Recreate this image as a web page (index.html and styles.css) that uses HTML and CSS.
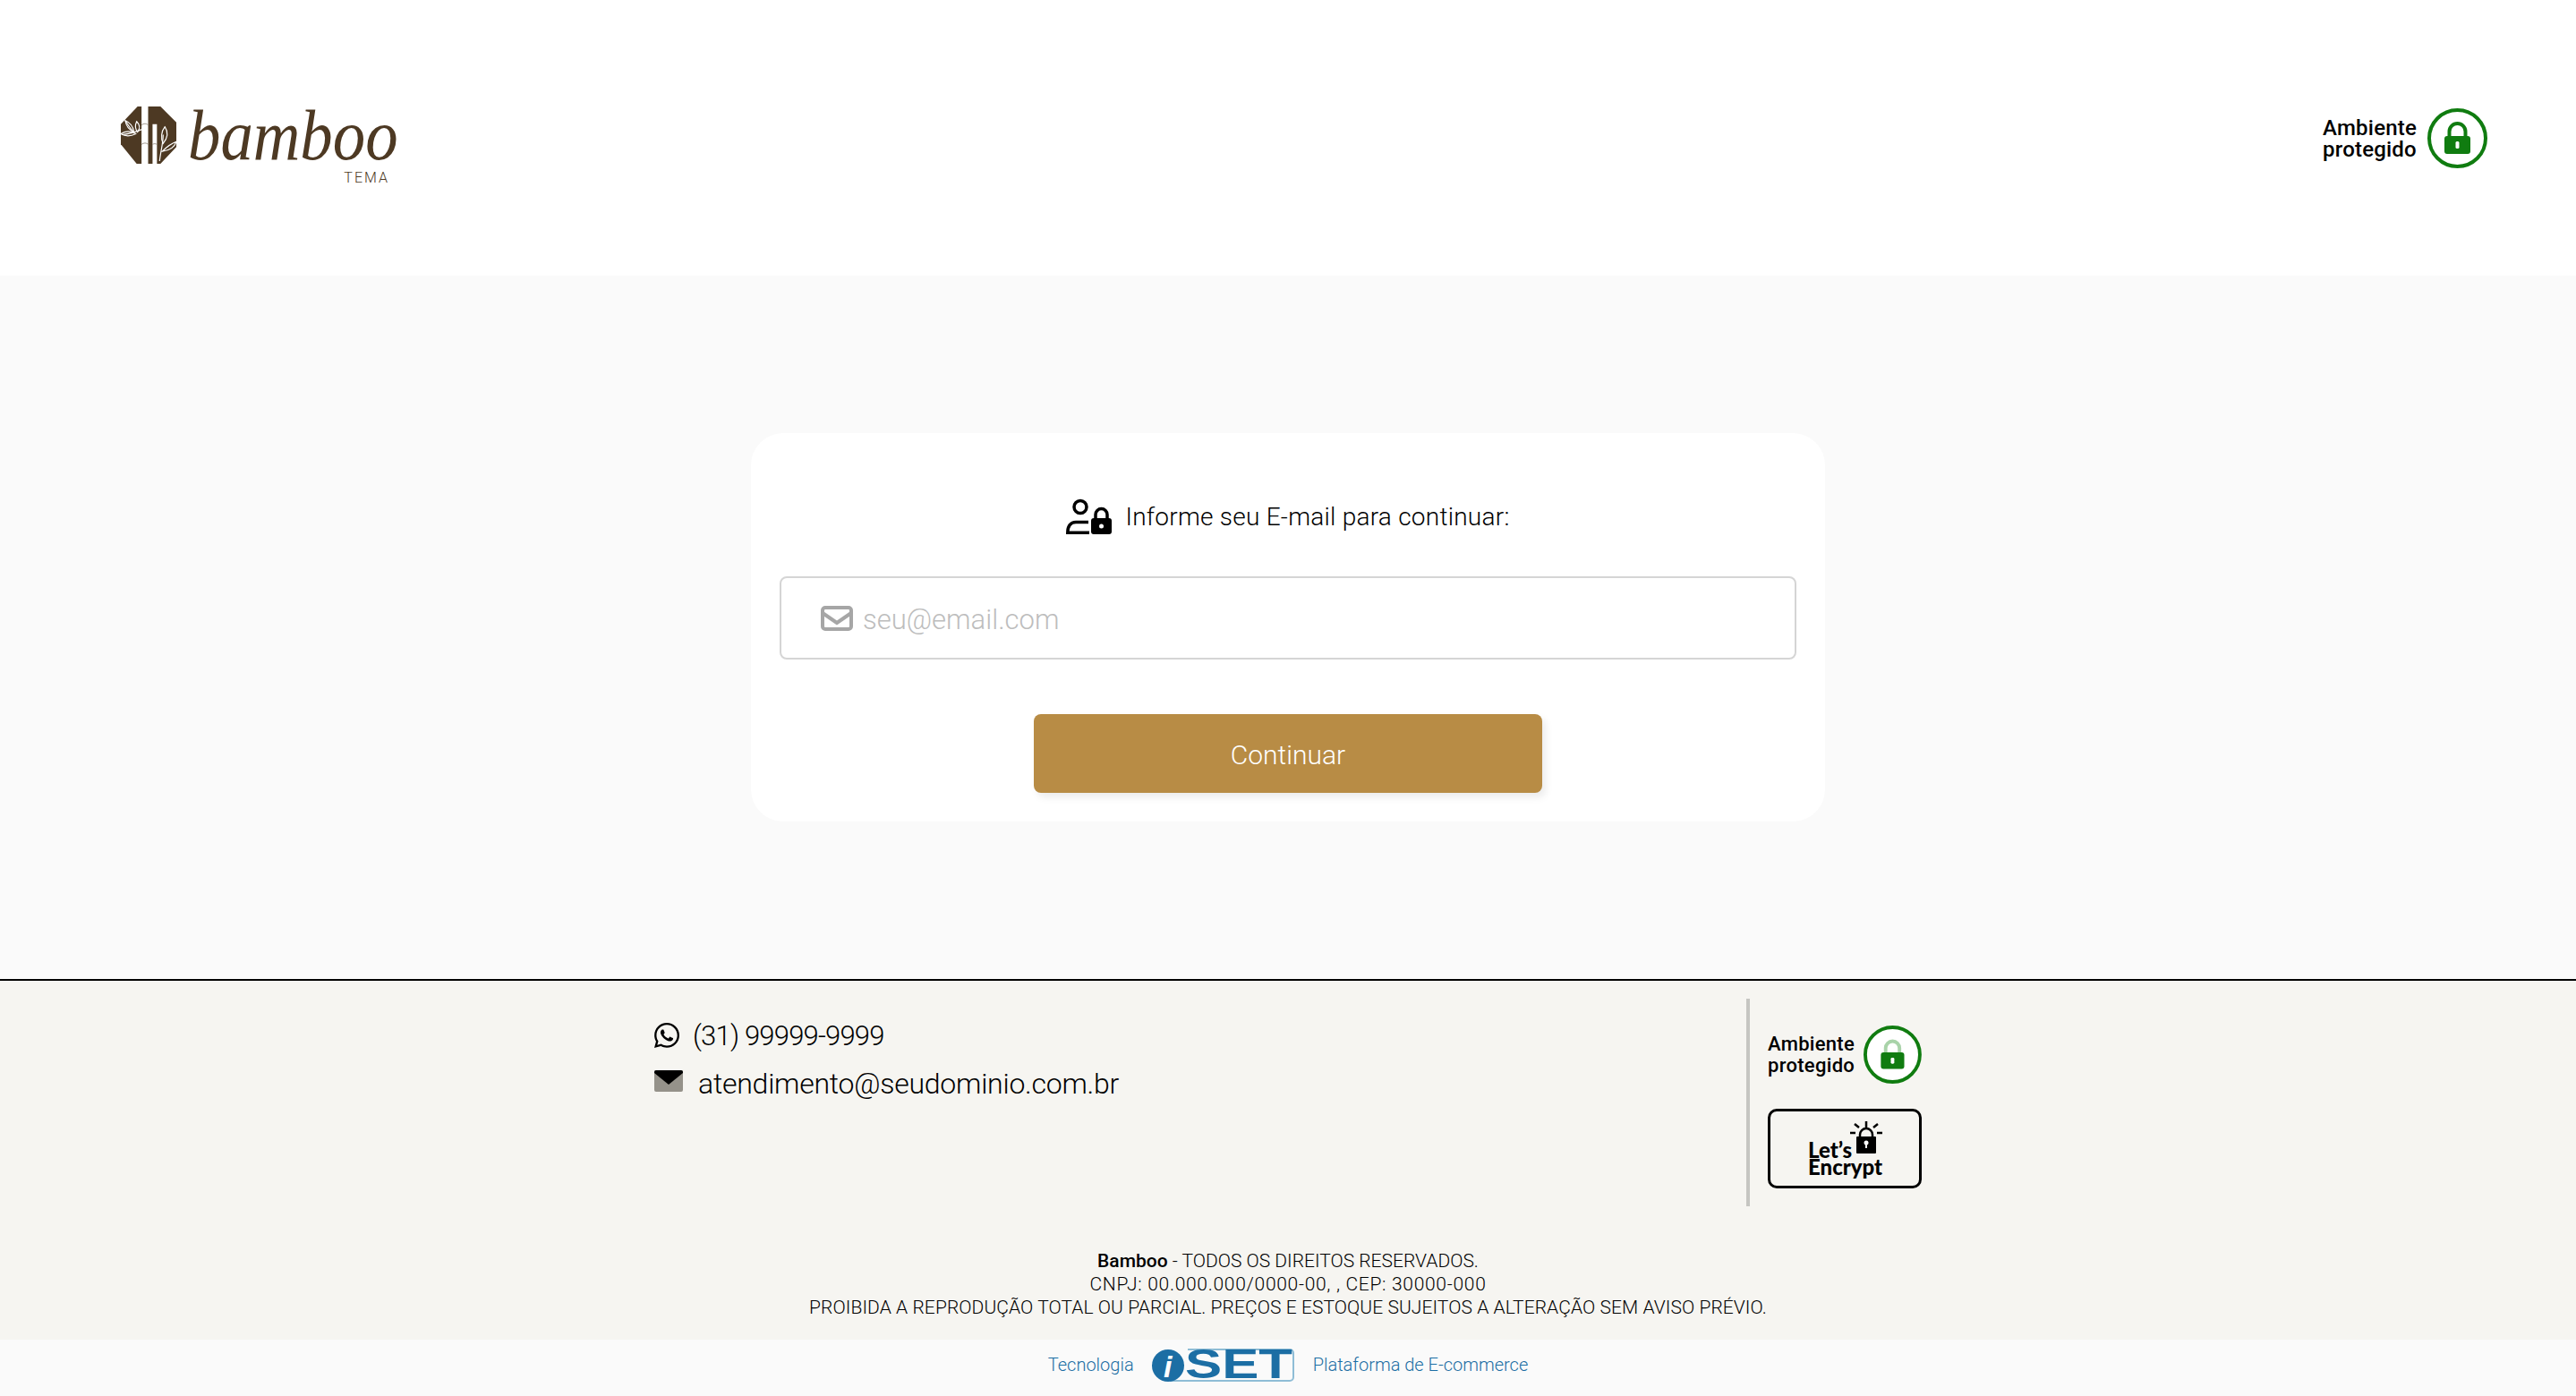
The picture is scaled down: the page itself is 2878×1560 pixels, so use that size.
FILE: index.html
```html
<!DOCTYPE html>
<html lang="pt-BR">
<head>
    <meta charset="UTF-8">
    <title>Bamboo - Identificação</title>
    <link rel="stylesheet" href="styles.css">
</head>
<body>
    <header class="topo">
        <a class="logo" href="#">
            <svg class="logo-emblema" viewBox="4 4 65 66">
                <polygon fill="#4d3923" points="24,4 28.5,4 28.5,69 23,69 5,47 5,24"/>
                <polygon fill="#4d3923" points="36,4 50,4 68,22 68,50 50,69 46,69 46,24 41,24 41,69 36,69"/>
                <g fill="none" stroke="#fff" stroke-width="1.2">
                    <path d="M6 36 C16 35 24 32 29 30"/>
                    <path d="M10 20 C13 25 17 30 20 34"/>
                    <path d="M10 20 C15 22 19 27 20 33 C15 31 11 26 10 20Z"/>
                    <path d="M23 21 C27 25 27 29 24 33 C21 29 21 25 23 21Z"/>
                    <path d="M5 35 C11 31 17 32 22 35 C16 38 10 38 5 35Z"/>
                    <path d="M49 66 C50 55 53 47 53 36"/>
                    <path d="M55 27 C59 33 58 40 53 46 C50 40 51 32 55 27Z"/>
                    <path d="M52 55 C57 50 62 46 68 44 C66 50 60 54 52 55Z"/>
                </g>
                <path fill="none" stroke="#8b8174" stroke-width=".8" d="M28.5 25 C31 23 34 23 36 25 M28.5 47 C31 45 34 45 36 47 M41 47 C43 46 44 46 46 47"/>
            </svg>
            <span class="logo-texto">
                <span class="logo-nome">bamboo</span>
                <span class="logo-tema">TEMA</span>
            </span>
        </a>
        <div class="protegido">
            <span class="protegido-txt">Ambiente<br>protegido</span>
            <svg class="cadeado" viewBox="0 0 67 67">
                <circle cx="33.5" cy="33.5" r="31.5" fill="none" stroke="#107c10" stroke-width="4"/>
                <path fill="none" stroke="#107c10" stroke-width="4" d="M24.500 31v-5a9 9 0 0 1 18 0v5"/>
                <rect x="19" y="31" width="29" height="20" rx="3" fill="#107c10"/>
                <rect x="31.500" y="37" width="4" height="8" rx="1.500" fill="#fff"/>
            </svg>
        </div>
    </header>

    <main class="conteudo">
        <form class="cartao">
            <div class="cartao-titulo">
                <svg class="icone-usuario" viewBox="0 0 51 40">
                    <circle cx="16" cy="9.500" r="7" fill="none" stroke="#000" stroke-width="3.500"/>
                    <path fill="none" stroke="#000" stroke-width="3.500" d="M25 26.500H11C5 26.500 1.800 31 1.800 38.300H26"/>
                    <path fill="none" stroke="#000" stroke-width="3.500" d="M33 23v-5a6.500 6.500 0 0 1 13 0v5"/>
                    <rect x="28" y="22" width="23" height="18" rx="3" fill="#000"/>
                    <circle cx="39.500" cy="31" r="2.500" fill="#fff"/>
                </svg>
                <span>Informe seu E-mail para continuar:</span>
            </div>
            <label class="campo">
                <svg class="icone-envelope" viewBox="0 0 36 28">
                    <rect x="2" y="2" width="32" height="24" rx="3" fill="none" stroke="#a6a6a6" stroke-width="4"/>
                    <path fill="none" stroke="#a6a6a6" stroke-width="4" d="M2 8l16 11L34 8"/>
                </svg>
                <input type="email" placeholder="seu@email.com">
            </label>
            <button class="botao" type="button">Continuar</button>
        </form>
    </main>

    <footer class="rodape">
        <div class="rodape-topo">
            <div class="contatos">
                <a class="contato contato-fone" href="#">
                    <svg class="icone-whats" viewBox="0 0 448 512"><path d="M380.900 97.100C339 55.100 283.200 32 223.900 32c-122.400 0-222 99.600-222 222 0 39.100 10.200 77.300 29.600 111L0 480l117.700-30.900c32.400 17.700 68.900 27 106.100 27h.1c122.300 0 224.100-99.600 224.100-222 0-59.300-25.200-115-67.100-157zm-157 341.600c-33.200 0-65.700-8.900-94-25.700l-6.700-4-69.800 18.300L72 359.200l-4.400-7c-18.500-29.400-28.200-63.300-28.200-98.200 0-101.700 82.800-184.500 184.600-184.500 49.300 0 95.600 19.200 130.400 54.100 34.800 34.900 56.200 81.200 56.100 130.500 0 101.800-84.900 184.600-186.600 184.600zm101.200-138.200c-5.500-2.800-32.800-16.200-37.900-18-5.100-1.900-8.800-2.800-12.500 2.800-3.700 5.600-14.300 18-17.600 21.800-3.200 3.700-6.500 4.200-12 1.400-32.600-16.300-54-29.100-75.500-66-5.700-9.800 5.700-9.100 16.300-30.300 1.800-3.700.9-6.900-.5-9.700-1.400-2.800-12.500-30.100-17.100-41.200-4.500-10.800-9.100-9.300-12.500-9.500-3.200-.2-6.900-.2-10.600-.2-3.700 0-9.700 1.400-14.800 6.900-5.100 5.600-19.400 19-19.400 46.300 0 27.300 19.900 53.700 22.600 57.400 2.800 3.700 39.100 59.700 94.800 83.800 35.200 15.200 49 16.500 66.600 13.900 10.700-1.600 32.800-13.400 37.400-26.400 4.600-13 4.600-24.100 3.200-26.400-1.300-2.500-5-3.900-10.500-6.600z"/></svg>
                    <span>(31) 99999-9999</span>
                </a>
                <a class="contato contato-mail" href="#">
                    <svg class="icone-mail" viewBox="0 0 32 24">
                        <rect y="0" width="32" height="24" rx="2" fill="#95928a"/>
                        <path d="M0 2a2 2 0 0 1 2-2h28a2 2 0 0 1 2 2v1L16 16 0 3z" fill="#000"/>
                    </svg>
                    <span>atendimento@seudominio.com.br</span>
                </a>
            </div>
            <div class="selos">
                <div class="protegido protegido-rodape">
                    <span class="protegido-txt">Ambiente<br>protegido</span>
                    <svg class="cadeado" viewBox="0 0 67 67">
                        <circle cx="33.500" cy="33.500" r="31.500" fill="#fff" stroke="#107c10" stroke-width="4"/>
                        <path fill="none" stroke="#a9d3a9" stroke-width="4" d="M25.500 33v-7a8 8 0 0 1 16 0v7"/>
                        <rect x="20" y="31" width="27" height="19" rx="3" fill="#107c10"/>
                        <rect x="31.500" y="37" width="4" height="7" rx="1.500" fill="#fff"/>
                    </svg>
                </div>
                <div class="selo-encrypt">
                    <div class="encrypt-linha">
                        <span class="encrypt-lets">Let’s</span>
                        <svg class="encrypt-cadeado" viewBox="0 0 36 36">
                            <g stroke="#000" stroke-width="2.500" fill="none">
                                <path d="M18 0v7M5 3l5 4M31 3l-5 4M0 13h6M30 13h6"/>
                                <path d="M11 20v-5a7 7 0 0 1 14 0v5"/>
                            </g>
                            <rect x="7" y="17" width="22" height="19" rx="1" fill="#000"/>
                            <circle cx="18" cy="24" r="2.500" fill="#fff"/>
                            <rect x="17" y="25" width="2" height="5" fill="#fff"/>
                        </svg>
                    </div>
                    <div class="encrypt-nome">Encrypt</div>
                </div>
            </div>
        </div>
        <div class="direitos">
            <p><strong>Bamboo</strong> - TODOS OS DIREITOS RESERVADOS.</p>
            <p class="direitos-cnpj">CNPJ: 00.000.000/0000-00, , CEP: 30000-000</p>
            <p class="direitos-aviso">PROIBIDA A REPRODUÇÃO TOTAL OU PARCIAL. PREÇOS E ESTOQUE SUJEITOS A ALTERAÇÃO SEM AVISO PRÉVIO.</p>
        </div>
    </footer>

    <div class="tecnologia">
        <span>Tecnologia</span>
        <svg class="logo-iset" viewBox="0 -9 160 54">
            <path fill="none" stroke="#8fbdd6" stroke-width="2" d="M20 36H154a4 4 0 0 0 4-4V5a4 4 0 0 0-4-4H40"/>
            <circle cx="18" cy="19" r="18" fill="#1c6ea4"/>
            <text class="iset-i" x="13" y="32">i</text>
            <text class="iset-set" x="37" y="33" textLength="120" lengthAdjust="spacingAndGlyphs">SET</text>
        </svg>
        <span>Plataforma de E-commerce</span>
    </div>
</body>
</html>
```

FILE: styles.css
```css
* {
    box-sizing: border-box;
}
body {
    margin: 0;
    min-height: 1560px;
    display: flex;
    flex-direction: column;
    font-family: Roboto, "Liberation Sans", sans-serif;
    color: #000;
    background-color: #fff;
}
a {
    color: inherit;
    text-decoration: none;
}
p {
    margin: 0;
}

/* topo */
.topo {
    height: 308px;
    padding: 0 99px 0 134px;
    display: flex;
    align-items: center;
    justify-content: space-between;
    background-color: #fff;
}
.logo {
    display: flex;
    align-items: flex-start;
    gap: 12px;
    height: 87px;
    margin-top: 17px;
    color: #4d3923;
}
.logo-emblema {
    width: 64px;
    height: 65px;
}
.logo-texto {
    display: flex;
    flex-direction: column;
    align-items: flex-end;
    width: 232px;
}
.logo-nome {
    display: block;
    width: 100%;
    margin: 2px 0 10px;
    font-family: "Liberation Serif", serif;
    font-style: italic;
    font-size: 80px;
    line-height: 60px;
    white-space: nowrap;
    transform: scaleX(.91);
    transform-origin: left top;
}
.logo-tema {
    font-size: 16px;
    line-height: 16px;
    letter-spacing: 2px;
    margin-right: 7px;
    font-weight: 300;
}
.protegido {
    display: flex;
    align-items: center;
    gap: 12px;
}
.protegido-txt {
    padding-top: 2px;
    font-size: 24px;
    line-height: 24px;
    font-weight: 500;
    letter-spacing: .2px;
}
.cadeado {
    width: 67px;
    height: 67px;
}

/* cartao */
.conteudo {
    height: 786px;
    display: flex;
    align-items: center;
    justify-content: center;
    background-color: #fafafa;
}
.cartao {
    width: 1200px;
    height: 434px;
    padding: 72px 32px 32px;
    display: flex;
    flex-direction: column;
    align-items: center;
    background-color: #fff;
    border-radius: 36px;
}
.cartao-titulo {
    display: flex;
    align-items: center;
    gap: 15px;
    height: 42px;
    font-size: 28px;
    font-weight: 300;
    letter-spacing: .25px;
}
.icone-usuario {
    width: 51px;
    height: 40px;
}
.campo {
    width: 100%;
    height: 93px;
    margin-top: 46px;
    padding: 0 44px;
    display: flex;
    align-items: center;
    gap: 11px;
    background-color: #fff;
    border: 2px solid #d5d5d5;
    border-radius: 8px;
}
.icone-envelope {
    width: 36px;
    height: 28px;
    flex-shrink: 0;
}
.campo input {
    flex: 1;
    border: 0;
    outline: 0;
    background: none;
    font-family: inherit;
    font-size: 31px;
    font-weight: 300;
    padding: 3px 0 0;
    color: #333;
}
.campo input::placeholder {
    color: #bdbdbd;
    opacity: 1;
}
.botao {
    width: 568px;
    height: 88px;
    margin-top: 61px;
    flex-shrink: 0;
    padding-top: 3px;
    border: 0;
    border-radius: 8px;
    background-color: #b88c45;
    box-shadow: 4px 5px 8px rgba(0, 0, 0, .08);
    color: #fff;
    font-family: inherit;
    font-size: 30px;
    font-weight: 300;
}

/* rodape */
.rodape {
    height: 403px;
    padding-top: 20px;
    background-color: #f6f5f1;
    border-top: 2px solid #000;
}
.rodape-topo {
    width: 1416px;
    height: 232px;
    margin: 0 auto;
    display: flex;
    justify-content: space-between;
}
.contatos {
    display: flex;
    flex-direction: column;
    padding-top: 24px;
}
.contato {
    display: flex;
    align-items: center;
    font-size: 32px;
    font-weight: 300;
}
.contato-fone {
    height: 34px;
    gap: 15px;
    font-size: 31px;
    letter-spacing: -.8px;
}
.contato-mail {
    height: 34px;
    margin-top: 20px;
    gap: 17px;
    letter-spacing: -.25px;
}
.icone-whats {
    width: 28px;
    height: 32px;
}
.icone-mail {
    width: 32px;
    height: 24px;
    margin-top: -6px;
}
.selos {
    width: 196px;
    padding-left: 20px;
    border-left: 4px solid #c6c6c2;
}
.protegido-rodape {
    margin-top: 30px;
    gap: 10px;
}
.protegido-rodape .protegido-txt {
    padding-top: 0;
    font-size: 22px;
    line-height: 24px;
    letter-spacing: .3px;
}
.protegido-rodape .cadeado {
    width: 65px;
    height: 65px;
}
.selo-encrypt {
    width: 172px;
    height: 89px;
    margin-top: 28px;
    padding: 11px 0 0 42px;
    border: 3px solid #000;
    border-radius: 10px;
    font-family: Lato, sans-serif;
    font-weight: 900;
    font-size: 24px;
    line-height: 20px;
}
.encrypt-linha {
    display: flex;
    align-items: flex-end;
    gap: 0;
}
.encrypt-lets {
    margin-bottom: -6px;
}
.encrypt-cadeado {
    width: 36px;
    height: 36px;
    margin-left: -2px;
}
.encrypt-nome {
    margin-top: 5px;
}
.direitos {
    margin-top: 48px;
    text-align: center;
    font-size: 21px;
    line-height: 26px;
    font-weight: 300;
}
.direitos strong {
    font-weight: 500;
}
.direitos-cnpj {
    letter-spacing: .7px;
}
.direitos-aviso {
    letter-spacing: .07px;
}

/* barra final */
.tecnologia {
    flex: 1;
    padding-bottom: 8px;
    display: flex;
    align-items: center;
    justify-content: center;
    gap: 20px;
    font-size: 20px;
    font-weight: 300;
    color: #1c6ea4;
    background-color: #fafafa;
}
.logo-iset {
    width: 160px;
    height: 54px;
}
.iset-i {
    font-family: "Liberation Sans", sans-serif;
    font-style: italic;
    font-weight: 700;
    font-size: 34px;
    fill: #fff;
}
.iset-set {
    font-family: "Liberation Sans", sans-serif;
    font-weight: 700;
    font-size: 46px;
    fill: #1c6ea4;
}
```
